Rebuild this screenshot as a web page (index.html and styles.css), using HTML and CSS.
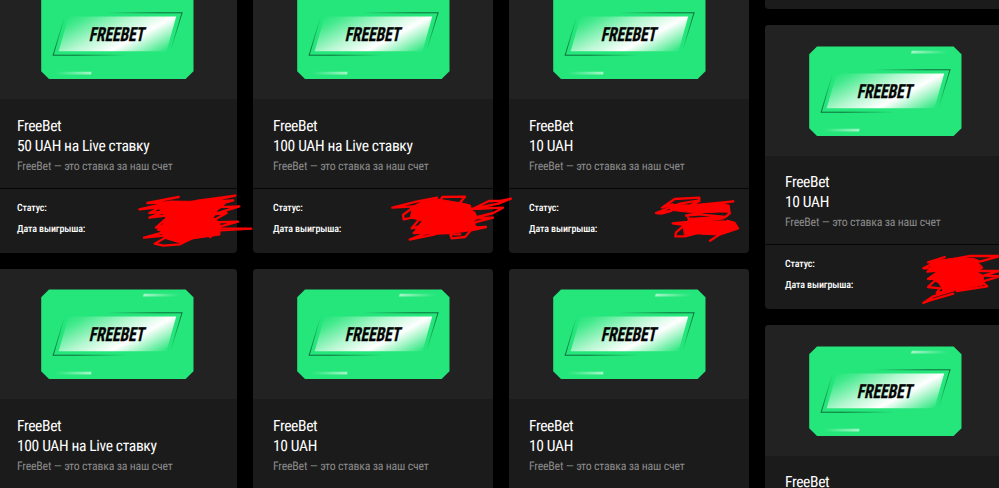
FILE: index.html
```
<!DOCTYPE html>
<html lang="ru">
<head>
    <meta charset="UTF-8">
    <meta name="viewport" content="width=device-width, initial-scale=1.0">
    <title>FreeBet</title>
    <link rel="stylesheet" href="styles.css">
</head>
<body>
    <svg class="sprite" aria-hidden="true">
        <defs>
            <linearGradient id="shine" gradientUnits="userSpaceOnUse" x1="27.7" y1="27.6" x2="63.9" y2="95.4">
                <stop offset="0" stop-color="#25e67b"/>
                <stop offset="0.12" stop-color="#45ea8e"/>
                <stop offset="0.4" stop-color="#b4f7d0"/>
                <stop offset="0.65" stop-color="#fff"/>
                <stop offset="0.8" stop-color="#a5f5c7"/>
                <stop offset="1" stop-color="#25e67b"/>
            </linearGradient>
            <linearGradient id="edgeTop" gradientUnits="userSpaceOnUse" x1="65" y1="0" x2="141" y2="0">
                <stop offset="0" stop-color="#0b6b38" stop-opacity="0"/>
                <stop offset="0.7" stop-color="#0b6b38"/>
            </linearGradient>
            <linearGradient id="edgeBottom" gradientUnits="userSpaceOnUse" x1="11" y1="0" x2="86" y2="0">
                <stop offset="0.3" stop-color="#0b6b38"/>
                <stop offset="1" stop-color="#0b6b38" stop-opacity="0"/>
            </linearGradient>
            <linearGradient id="edgeRight" gradientUnits="userSpaceOnUse" x1="0" y1="24" x2="0" y2="62">
                <stop offset="0" stop-color="#0b6b38"/>
                <stop offset="1" stop-color="#0b6b38" stop-opacity="0"/>
            </linearGradient>
            <linearGradient id="edgeLeft" gradientUnits="userSpaceOnUse" x1="0" y1="66" x2="0" y2="28">
                <stop offset="0" stop-color="#0b6b38"/>
                <stop offset="1" stop-color="#0b6b38" stop-opacity="0"/>
            </linearGradient>
            <linearGradient id="fadeRight">
                <stop offset="0" stop-color="#a5f6c8"/>
                <stop offset="1" stop-color="#25e67b"/>
            </linearGradient>
            <linearGradient id="fadeLeft">
                <stop offset="0" stop-color="#25e67b"/>
                <stop offset="1" stop-color="#a5f6c8"/>
            </linearGradient>
        </defs>
        <symbol id="freebet" viewBox="0 0 153 91">
            <path fill="#25e67b" d="M8 0.4H144.6L152.5 8.2V82.2L144.6 90H8L0.2 82.2V8.2z"/>
            <path fill="url(#fadeRight)" d="M102.8 4.8H138V7.6H102z"/>
            <path fill="url(#fadeLeft)" d="M15 82.7H50.6L50 85.5H15z"/>
            <path fill="url(#shine)" d="M27.7 27.6H135.2L125.5 62.2H17.6z"/>
            <rect x="65" y="23.3" width="76.5" height="1" fill="url(#edgeTop)"/>
            <rect x="11.7" y="65.7" width="74" height="1" fill="url(#edgeBottom)"/>
            <path fill="none" stroke="url(#edgeRight)" d="M141 23.8L129.5 62"/>
            <path fill="none" stroke="url(#edgeLeft)" d="M12.2 66.2L23.5 28"/>
            <text class="banner-text" transform="translate(47.8 52) skewX(-12)" textLength="55" lengthAdjust="spacingAndGlyphs">FREEBET</text>
        </symbol>
    </svg>

    <div class="bonuses">
        <div class="column">
            <div class="card">
                <div class="card-media"><svg class="banner"><use href="#freebet"/></svg></div>
                <div class="card-info">
                    <div class="title">FreeBet</div>
                    <div class="title">50 UAH на Live ставку</div>
                    <div class="note">FreeBet — это ставка за наш счет</div>
                </div>
                <div class="card-status">
                    <div class="row">Статус:</div>
                    <div class="row">Дата выигрыша:</div>
                </div>
            </div>
            <div class="card">
                <div class="card-media"><svg class="banner"><use href="#freebet"/></svg></div>
                <div class="card-info">
                    <div class="title">FreeBet</div>
                    <div class="title">100 UAH на Live ставку</div>
                    <div class="note">FreeBet — это ставка за наш счет</div>
                </div>
            </div>
        </div>

        <div class="column">
            <div class="card">
                <div class="card-media"><svg class="banner"><use href="#freebet"/></svg></div>
                <div class="card-info">
                    <div class="title">FreeBet</div>
                    <div class="title">100 UAH на Live ставку</div>
                    <div class="note">FreeBet — это ставка за наш счет</div>
                </div>
                <div class="card-status">
                    <div class="row">Статус:</div>
                    <div class="row">Дата выигрыша:</div>
                </div>
            </div>
            <div class="card">
                <div class="card-media"><svg class="banner"><use href="#freebet"/></svg></div>
                <div class="card-info">
                    <div class="title">FreeBet</div>
                    <div class="title">10 UAH</div>
                    <div class="note">FreeBet — это ставка за наш счет</div>
                </div>
            </div>
        </div>

        <div class="column">
            <div class="card">
                <div class="card-media"><svg class="banner"><use href="#freebet"/></svg></div>
                <div class="card-info">
                    <div class="title">FreeBet</div>
                    <div class="title">10 UAH</div>
                    <div class="note">FreeBet — это ставка за наш счет</div>
                </div>
                <div class="card-status">
                    <div class="row">Статус:</div>
                    <div class="row">Дата выигрыша:</div>
                </div>
            </div>
            <div class="card">
                <div class="card-media"><svg class="banner"><use href="#freebet"/></svg></div>
                <div class="card-info">
                    <div class="title">FreeBet</div>
                    <div class="title">10 UAH</div>
                    <div class="note">FreeBet — это ставка за наш счет</div>
                </div>
            </div>
        </div>

        <div class="column column-shifted">
            <div class="card card-end"></div>
            <div class="card">
                <div class="card-media"><svg class="banner"><use href="#freebet"/></svg></div>
                <div class="card-info">
                    <div class="title">FreeBet</div>
                    <div class="title">10 UAH</div>
                    <div class="note">FreeBet — это ставка за наш счет</div>
                </div>
                <div class="card-status">
                    <div class="row">Статус:</div>
                    <div class="row">Дата выигрыша:</div>
                </div>
            </div>
            <div class="card">
                <div class="card-media"><svg class="banner"><use href="#freebet"/></svg></div>
                <div class="card-info">
                    <div class="title">FreeBet</div>
                </div>
            </div>
        </div>
    </div>

    <!-- marker strokes over the status values -->
    <svg class="marker" viewBox="0 0 999 488">
        <g transform="translate(130 185) scale(0.3333)">
            <path class="blot" d="M90 56L120 48L180 49L240 42L275 42L285 58L262 76L250 98L270 114L270 150L185 162L150 174L104 160L90 134L108 98L90 76z"/>
            <path d="M146 36L52 54L120 52L28 73L92 66L58 84L104 80L58 98L120 90L78 128L112 118L84 134L108 140L42 158L120 150L74 176L100 182L150 178L190 158"/>
            <path d="M200 48L316 32L230 50L310 46L230 68L328 64L250 88L290 84L240 112L324 110L250 130L364 131L270 136L240 156"/>
        </g>
        <g transform="translate(385 185) scale(0.3333)">
            <path class="blot" d="M84 64L110 50L158 42L205 50L230 54L256 60L260 76L270 82L278 100L264 110L275 126L250 138L195 146L150 148L104 146L90 134L112 108L76 98L80 76z"/>
            <path d="M156 38L94 50L22 68L88 64L54 90L56 103L112 92L80 130L124 118L86 144L128 142L74 164L150 148"/>
            <path d="M164 50L172 36L240 35L226 52M250 78L312 48L346 48L378 41L340 56L260 72L354 68L325 84L260 100L324 98L270 112L260 128L303 126L258 136L240 156L200 160L196 148L226 148"/>
        </g>
        <g transform="translate(640 185) scale(0.3333)">
            <path class="blot" d="M96 58L150 60L250 54L264 62L264 76L220 82L150 82L92 76zM130 116L200 108L262 108L286 116L290 130L270 140L230 150L164 146L134 150z"/>
            <path d="M178 46L178 38L104 42L66 68L98 58M178 46L120 56L48 84L94 78L64 86L50 84M178 48L150 62L280 49L210 58L266 62L268 80L200 78L138 92L180 88L256 96L150 102L142 112M256 96L270 84M142 92L148 106L200 106L250 100L98 115L134 120L108 142L106 154L134 154L180 142M262 108L284 114L294 130L240 148L210 167"/>
        </g>
        <g transform="translate(900 235) scale(0.3333)">
            <path class="blot" d="M90 88L110 76L160 70L220 70L230 84L240 98L226 108L250 122L250 150L220 156L170 166L130 170L118 146L94 130L110 114L94 100z"/>
            <path d="M134 66L84 82L110 80L70 100L100 100L82 110L120 106L84 132L112 130L84 156L120 160L110 174L160 166L100 184L70 204L90 196L160 176"/>
            <path d="M150 74L210 63L300 63L240 80L220 72L246 98L226 108L298 108L250 122L300 124L246 140L262 154L170 168"/>
        </g>
    </svg>
</body>
</html>
```
FILE: styles.css
```
html, body {
    height: 100%;
    margin: 0;
    overflow: hidden;
    background: #000;
}

body {
    font-family: 'Roboto Condensed', Roboto, sans-serif;
    font-stretch: 75%;
    text-rendering: geometricPrecision;
    color: #fff;
}

.sprite {
    position: absolute;
    width: 0;
    height: 0;
}

.bonuses {
    display: flex;
    align-items: flex-start;
    gap: 16px;
    width: 1008px;
    margin: -31px 0 0 -3px;
}

.column {
    display: flex;
    flex-direction: column;
    gap: 16px;
    width: 240px;
    flex: none;
}

.column-shifted {
    padding-top: 20px;
}

.card {
    height: 284px;
    background: #1b1b1b;
    border-radius: 4px;
    overflow: hidden;
}

.card-end {
    height: 20px;
}

.card-media {
    height: 130px;
    padding-top: 20px;
    box-sizing: border-box;
    background: #222;
}

.column-shifted .card-media {
    height: 131px;
    padding-top: 21px;
}

.banner {
    display: block;
    width: 153px;
    height: 91px;
    margin-left: 44px;
}

.banner-text {
    font-size: 19.5px;
    font-weight: 700;
    fill: #050505;
    stroke: #050505;
    stroke-width: 0.3;
}

.card-info {
    height: 89px;
    padding: 18px 20px 0;
    box-sizing: border-box;
}

.column-shifted .card-info {
    height: 88px;
    padding-top: 17px;
}

.title {
    font-size: 15.5px;
    line-height: 19.5px;
    letter-spacing: -0.34px;
    white-space: nowrap;
}

.note {
    font-size: 11.8px;
    line-height: 20px;
    letter-spacing: -0.18px;
    color: #8b8b8b;
    white-space: nowrap;
}

.card-status {
    padding: 9px 20px 0;
    border-top: 1px solid #050505;
}

.row {
    font-size: 10px;
    font-weight: 500;
    line-height: 21px;
    letter-spacing: -0.12px;
}

.marker {
    position: absolute;
    left: 0;
    top: 0;
    width: 999px;
    height: 488px;
    fill: none;
    stroke: #fe0000;
    stroke-width: 7;
    stroke-linecap: round;
    stroke-linejoin: round;
}

.blot {
    fill: #fe0000;
    stroke-width: 3;
}
```
